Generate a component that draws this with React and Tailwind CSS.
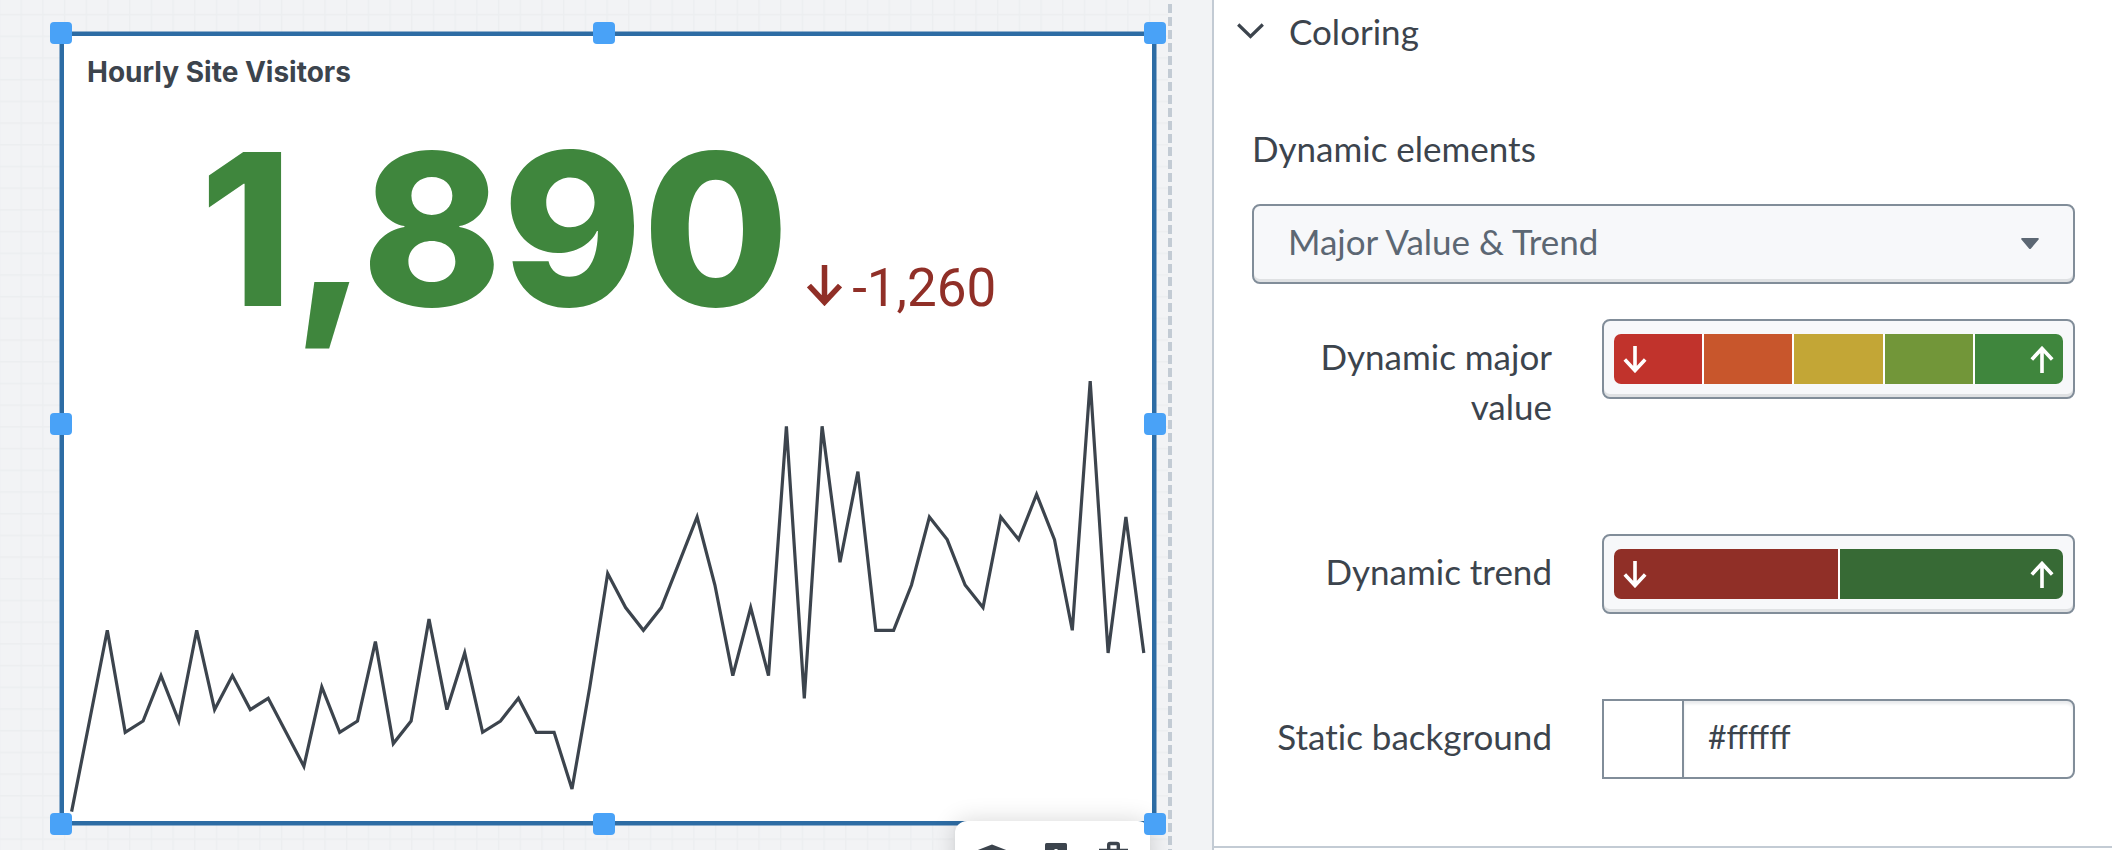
import React from "react";

const VISITORS = [
  -7, 1, 9, 0, 1, 5, 1, 9, 2, 5, 2, 3, 0, -3, 4, 0, 1, 8, -1, 1, 10, 2, 7, 0, 1, 3, 0, 0, -5, 4, 14,
  11, 9, 11, 15, 19, 13, 5, 11, 5, 27, 3, 27, 15, 23, 9, 9, 13, 19, 17, 13, 11, 19, 17, 21, 17, 9, 31,
  7, 19, 7,
];

const HANDLES = [
  ["Resize top left", "-left-3.5 -top-3.5 cursor-nwse-resize"],
  ["Resize top", "left-[48.6%] -top-3.5 cursor-ns-resize"],
  ["Resize top right", "-right-3.5 -top-3.5 cursor-nesw-resize"],
  ["Resize left", "-left-3.5 top-[48%] cursor-ew-resize"],
  ["Resize right", "-right-3.5 top-[48%] cursor-ew-resize"],
  ["Resize bottom left", "-left-3.5 -bottom-3.5 cursor-nesw-resize"],
  ["Resize bottom", "left-[48.6%] -bottom-3.5 cursor-ns-resize"],
  ["Resize bottom right", "-right-3.5 -bottom-3.5 cursor-nwse-resize"],
];

const MAJOR_COLORS = ["bg-[#c1332c]", "bg-[#c8562c]", "bg-[#c3a636]", "bg-[#729639]", "bg-[#3f863d]"];
const TREND_COLORS = ["bg-[#902f27]", "bg-[#376a35]"];

function Arrow({ up = false, className }) {
  return (
    <svg viewBox="0 0 35 41" fill="none" stroke="currentColor" strokeWidth="5.5" className={className} aria-hidden="true">
      {up ? <path d="M17.5 41V4M2 20.5 17.5 3.8 33 20.5" /> : <path d="M17.5 0v37M2 20.5l15.5 16.7L33 20.5" />}
    </svg>
  );
}

function Sparkline() {
  const points = VISITORS.map((v, i) => `${(7.6 + i * 17.87).toFixed(1)},${(365.3 - v * 11.333).toFixed(1)}`).join(" ");
  return (
    <svg viewBox="0 0 1088 454" preserveAspectRatio="none" className="block h-[454px] w-full" aria-hidden="true">
      <polyline points={points} fill="none" stroke="#3c444d" strokeWidth="3.2" vectorEffect="non-scaling-stroke" />
    </svg>
  );
}

function Grid() {
  return (
    <svg className="absolute inset-0 size-full" aria-hidden="true">
      <defs>
        <pattern id="grid" x="20.5" y="13.8" width="21.7" height="21.7" patternUnits="userSpaceOnUse">
          <path d="M.7 0v21.7M0 .7h21.7" stroke="#eceef0" strokeWidth="1.4" />
        </pattern>
      </defs>
      <rect width="100%" height="100%" fill="url(#grid)" />
    </svg>
  );
}

function Toolbar() {
  return (
    <div className="absolute top-full right-0.5 flex rounded-xl bg-white px-1.5 pt-5 pb-4 text-[#3c444d] shadow-[0_0_24px_rgba(0,0,0,0.16)]">
      <button type="button" aria-label="Arrange layers">
        <svg viewBox="0 0 61 36" className="h-9 w-[61px]" fill="currentColor">
          <path d="M31 3.500 49 10.500 31 18 13 10.500z" />
          <path d="m13 18 18 7.500L49 18v4l-18 7.500L13 22z" />
        </svg>
      </button>
      <button type="button" aria-label="Duplicate">
        <svg viewBox="0 0 61 36" className="h-9 w-[61px]">
          <rect x="23" y="2" width="22" height="30" rx="1.5" fill="currentColor" />
          <path d="M34 8v16M26 16h16" stroke="#fff" strokeWidth="3" />
        </svg>
      </button>
      <button type="button" aria-label="Delete">
        <svg viewBox="0 0 61 36" className="h-9 w-[61px]" fill="none" stroke="currentColor" strokeWidth="3.4">
          <path d="M16 9.5h29M25.7 9.500V4a1.500 1.500 0 0 1 1.500-1.500h6.600A1.500 1.500 0 0 1 35.300 4v5.500M20 9.500V32h21V9.500" />
        </svg>
      </button>
    </div>
  );
}

function Row({ id, label, className, children }) {
  return (
    <div className={`flex items-start gap-[50px] ${className}`}>
      <label htmlFor={id} className="w-[300px] shrink-0 pt-3 text-right [font-variant-ligatures:none]">
        {label}
      </label>
      <div className="flex h-20 min-w-0 flex-1">{children}</div>
    </div>
  );
}

function ColorRange({ id, colors }) {
  return (
    <button
      id={id}
      type="button"
      className="flex w-full rounded-lg border-2 border-[#818d99] bg-[#f7f8fa] px-2.5 py-[13px] shadow-[inset_0_-3px_0_#dfe1e3]"
    >
      <span className="flex h-[50px] w-full gap-[2px] overflow-hidden rounded-[7px] bg-white text-white">
        {colors.map((color, i) => (
          <span key={color} className={`flex flex-1 items-center px-[9px] ${i ? "justify-end" : "justify-start"} ${color}`}>
            {i === 0 && <Arrow className="h-[27px] w-6" />}
            {i === colors.length - 1 && <Arrow up className="h-[27px] w-6" />}
          </span>
        ))}
      </span>
    </button>
  );
}

export default function App() {
  return (
    <div className="flex h-screen overflow-hidden bg-[#f2f3f5] font-['Lato',sans-serif] text-[35px] leading-[50px] text-[#3c444d]">
      <main className="flex min-w-0 flex-1">
        <div className="relative min-w-0 flex-1 pt-8 pr-3 pl-[60px]">
          <Grid />
          <section className="relative border-4 border-[#2d6ca4] bg-white font-['Inter',sans-serif] ring-1 ring-[#2d6ca4]/50">
            <h2 className="px-[23px] pt-4 text-[28px] leading-10 font-bold">Hourly Site Visitors</h2>
            <div className="flex h-[275px] items-baseline justify-center pr-5 whitespace-nowrap">
              <span className="text-[212px] leading-[275px] font-extrabold text-[#3f863d]">1,890</span>
              <span className="ml-[18px] flex items-baseline gap-2.5 font-['Roboto',sans-serif] text-[53px] text-[#902f27]">
                <Arrow className="h-[41px] w-[35px]" />
                -1,260
              </span>
            </div>
            <Sparkline />
            <Toolbar />
            {HANDLES.map(([name, place]) => (
              <button key={name} type="button" aria-label={name} className={`absolute size-[22px] rounded-[4px] bg-[#49a2f7] ${place}`} />
            ))}
          </section>
        </div>
        <div className="w-1 bg-[repeating-linear-gradient(to_bottom,transparent_0_4px,#c3cbd4_4px_13px)]" />
        <div className="w-10" />
      </main>

      <aside className="w-[900px] shrink-0 border-l-2 border-[#c3cbd4] bg-white">
        <section className="border-b-2 border-[#c3cbd4] pb-[67px]">
          <button type="button" aria-expanded="true" className="flex items-center gap-[25px] pt-1.5 pl-[23px]">
            <svg viewBox="0 0 27 16" className="h-4 w-[27px]" fill="none" stroke="currentColor" strokeWidth="3.200" aria-hidden="true">
              <path d="M1.200 1.500 13.500 13.500 25.800 1.500" />
            </svg>
            Coloring
          </button>
          <div className="pr-[37px] pl-[38px]">
            <label htmlFor="dynamic-elements" className="mt-[67px] block">
              Dynamic elements
            </label>
            <div className="relative mt-[31px] flex h-20">
              <select
                id="dynamic-elements"
                defaultValue="both"
                className="w-full appearance-none rounded-lg border-2 border-[#818d99] bg-[#f7f8fa] px-[34px] pb-1.5 text-[#5c6773] shadow-[inset_0_-3px_0_#dfe1e3]"
              >
                <option value="both">Major Value &amp; Trend</option>
              </select>
              <svg viewBox="0 0 18 11" className="pointer-events-none absolute top-[34px] right-9 h-[11px] w-[18px]" fill="#5c6773" aria-hidden="true">
                <path d="M1 0h16a.9.9 0 0 1 .6 1.500L10 10.400a1.400 1.400 0 0 1-2 0L.4 1.500A.9.9 0 0 1 1 0z" />
              </svg>
            </div>
            <Row id="dynamic-major" label="Dynamic major value" className="mt-[35px]">
              <ColorRange id="dynamic-major" colors={MAJOR_COLORS} />
            </Row>
            <Row id="dynamic-trend" label="Dynamic trend" className="mt-[103px]">
              <ColorRange id="dynamic-trend" colors={TREND_COLORS} />
            </Row>
            <Row id="static-background" label="Static background" className="mt-[85px]">
              <button type="button" aria-label="Pick a background color" className="w-20 shrink-0 border-2 border-r-0 border-[#818d99] bg-white" />
              <input
                id="static-background"
                type="text"
                defaultValue="#ffffff"
                className="min-w-0 flex-1 rounded-r-lg border-2 border-[#818d99] bg-white px-6 pb-1 text-[32px] shadow-[inset_0_3px_3px_#e9ebed]"
              />
            </Row>
          </div>
        </section>
      </aside>
    </div>
  );
}
